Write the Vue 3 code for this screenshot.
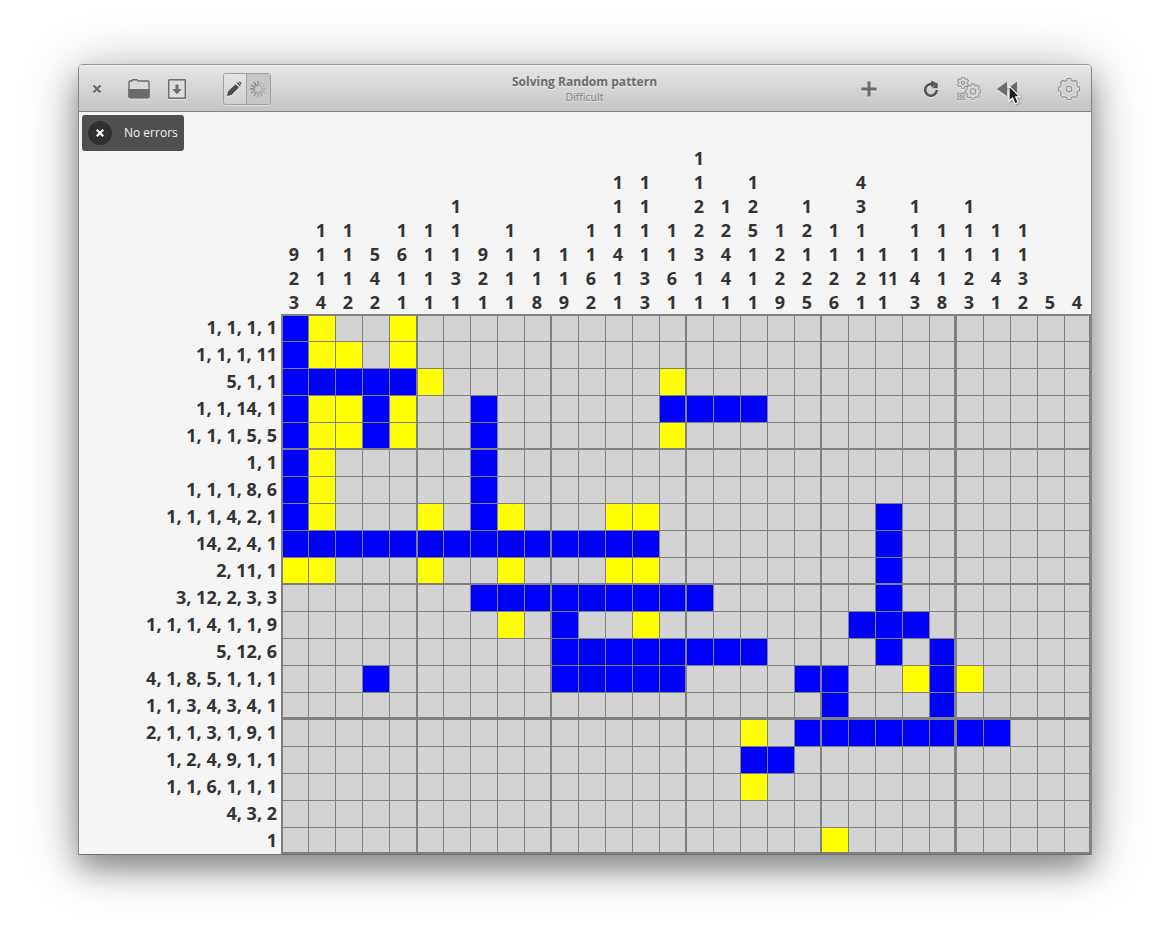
<script setup>
const columnClues = [
  '9 2 3', '1 1 1 4', '1 1 1 2', '5 4 2', '1 6 1 1', '1 1 1 1', '1 1 1 3 1', '9 2 1', '1 1 1 1', '1 1 8',
  '1 1 9', '1 1 6 2', '1 1 1 4 1 1', '1 1 1 1 3 3', '1 1 6 1', '1 1 2 2 3 1 1', '1 2 4 4 1', '1 2 5 1 1 1',
  '1 2 2 9', '1 2 1 2 5', '1 1 2 6', '4 3 1 1 2 1', '1 11 1', '1 1 1 4 3', '1 1 1 8', '1 1 1 2 3', '1 1 4 1',
  '1 1 3 2', '5', '4',
].map((clue) => clue.split(' '))

const rowClues = [
  '1, 1, 1, 1', '1, 1, 1, 11', '5, 1, 1', '1, 1, 14, 1', '1, 1, 1, 5, 5', '1, 1', '1, 1, 1, 8, 6',
  '1, 1, 1, 4, 2, 1', '14, 2, 4, 1', '2, 11, 1', '3, 12, 2, 3, 3', '1, 1, 1, 4, 1, 1, 9', '5, 12, 6',
  '4, 1, 8, 5, 1, 1, 1', '1, 1, 3, 4, 3, 4, 1', '2, 1, 1, 3, 1, 9, 1', '1, 2, 4, 9, 1, 1', '1, 1, 6, 1, 1, 1',
  '4, 3, 2', '1',
]

// '#' is a filled cell, 'o' a cell marked as uncertain
const rows = [
  '#o..o',
  '#oo.o',
  '#####o........o',
  '#oo#o..#......####',
  '#oo#o..#......o',
  '#o.....#',
  '#o.....#',
  '#o...o.#o...oo........#',
  '##############........#',
  'oo...o..o...oo........#',
  '.......#########......#',
  '........o.#..o.......###',
  '..........########....#.#',
  '...#......#####....##..o#o',
  '....................#...#',
  '.................o.########',
  '.................##',
  '.................o',
  '',
  '....................o',
].map((r) => r.padEnd(30, '.').split(''))

const spokes = Array.from({ length: 12 }, (_, i) => ({
  angle: i * 30,
  opacity: i === 0 ? 0.7 : 0.15 + (i / 12) * 0.8,
}))

// Outline of a cog with flat teeth, centred on the given point
function cog(cx, cy, teeth, inner, outer) {
  const step = (Math.PI * 2) / teeth
  const points = []
  for (let i = 0; i < teeth; i++) {
    const a = i * step - Math.PI / 2
    for (const [offset, radius] of [[-0.32, inner], [-0.22, outer], [0.22, outer], [0.32, inner]]) {
      const t = a + offset * step
      points.push(`${(cx + radius * Math.cos(t)).toFixed(2)} ${(cy + radius * Math.sin(t)).toFixed(2)}`)
    }
  }
  return `M${points.join('L')}Z`
}
</script>

<template>
  <main class="desktop">
    <section class="window">
      <header class="bar">
        <div class="side">
          <svg class="icon close" width="16" height="16" viewBox="0 0 16 16">
            <path d="M4.5 4.5l7 7M11.5 4.5l-7 7" stroke="#6b6b6b" stroke-width="2.3" />
          </svg>
          <svg class="icon" width="24" height="24" viewBox="0 0 24 24">
            <path d="M2 19.5V5.2Q2 4 3.2 4H4.5L5.5 2.8H9.8L11 4H20.8Q22 4 22 5.2V19.5Q22 20.7 20.8 20.7H3.2Q2 20.7 2 19.5Z" fill="#d9d9d9" stroke="#6b6b6b" stroke-width="1.4" />
            <path d="M1.4 12H22.7V19.5Q22.7 21.3 21 21.3H3Q1.4 21.3 1.4 19.5Z" fill="#6b6b6b" />
          </svg>
          <svg class="icon save" width="24" height="24" viewBox="0 0 24 24">
            <rect x="3.7" y="2.7" width="16.6" height="18.6" rx=".6" fill="#dcdcdc" stroke="#6b6b6b" stroke-width="1.4" />
            <path d="M10.5 7.5h3v4.5h3.3L12 17.3 7.2 12h3.3z" fill="#6b6b6b" />
          </svg>
          <div class="toggle">
            <span class="option">
              <svg class="icon" width="16" height="16" viewBox="0 0 16 16">
                <path d="M1 15l1-4.4 7.6-7.4 3.3 3.3-7.5 7.4zM10.6 2.3l1-1 3.3 3.3-1 1z" fill="#4a4a4a" />
                <path d="M12.4.9q1.3-.8 2.4.4t.4 2.4z" fill="#4a4a4a" />
              </svg>
            </span>
            <span class="option pressed">
              <svg width="16" height="16" viewBox="0 0 16 16">
                <path v-for="s in spokes" :key="s.angle" d="M8 .6V4.4" stroke="#707070" stroke-width="1.3" stroke-linecap="round" :opacity="s.opacity" :transform="`rotate(${s.angle} 8 8)`" />
              </svg>
            </span>
          </div>
        </div>
        <div class="heading">
          <div class="title">Solving Random pattern</div>
          <div class="subtitle">Difficult</div>
        </div>
        <div class="side right">
          <svg class="icon plus" width="24" height="24" viewBox="0 0 24 24">
            <path d="M12 4.5V19.5M4.5 12H19.5" stroke="#6b6b6b" stroke-width="3" />
          </svg>
          <svg class="icon" width="24" height="24" viewBox="0 0 24 24">
            <path d="M14.5 7.7A5.8 5.8 0 1 0 17.8 13" fill="none" stroke="#555" stroke-width="2.6" />
            <path d="M12.2 3.4l6.3 3.1-6.3 4.2z" fill="#555" />
            <path d="M18.7 5.8V11.3H12.9z" fill="#555" />
          </svg>
          <svg class="icon" width="24" height="24" viewBox="0 0 24 24" fill="#d8d8d8" stroke="#999" stroke-width="1.1" stroke-linejoin="round">
            <path :d="cog(16, 14.5, 8, 6.4, 7.8)" />
            <circle cx="16" cy="14.5" r="2.7" />
            <path :d="cog(6, 5.8, 6, 4.4, 5.8)" />
            <circle cx="6" cy="5.8" r="1.6" />
            <path d="M.8 16.2h2l1.2.9 1.2-.9h2v2l-.8 1.3.8 1.3v2h-2l-1.2-.8-1.2.8h-2v-2l.8-1.3-.8-1.3z" />
            <circle cx="4" cy="19.5" r="1.2" />
          </svg>
          <span class="rewind">
            <svg class="icon" width="24" height="24" viewBox="0 0 24 24">
              <path d="M2 12l10-7.2v14.4zM12 12l10-7.2v14.4z" fill="#6b6b6b" />
            </svg>
            <svg class="pointer" width="18" height="24" viewBox="0 0 18 24">
              <path d="M2 1.8V17.3L5.6 14 8.1 19.9 11.2 18.5 8.7 12.8H13z" fill="#1c1c1c" stroke="#fff" stroke-width="1.2" stroke-linejoin="round" />
            </svg>
          </span>
          <svg class="icon prefs" width="24" height="24" viewBox="0 0 24 24" fill="#dadada" stroke="#939393" stroke-width="1.1" stroke-linejoin="round">
            <path :d="cog(12, 12, 8, 8.9, 10.7)" />
            <circle cx="12" cy="12" r="6.3" stroke="#c6c6c6" />
            <circle cx="12" cy="12" r="2.8" />
          </svg>
        </div>
      </header>

      <div class="game">
        <div class="toast">
          <span class="dismiss">
            <svg width="10" height="10" viewBox="0 0 10 10">
              <path d="M1.8 1.8l6.4 6.4M8.2 1.8L1.8 8.2" stroke="#f5f5f5" stroke-width="2.3" />
            </svg>
          </span>
          <span class="message">No errors</span>
        </div>
        <div class="column-clues">
          <div v-for="(clue, c) in columnClues" :key="c" class="column-clue">
            <div>
              <div v-for="(n, i) in clue" :key="i">{{ n }}</div>
            </div>
          </div>
        </div>
        <div class="row-clues">
          <div v-for="(clue, r) in rowClues" :key="r" class="row-clue">{{ clue }}</div>
        </div>
        <div class="board">
          <div v-for="(row, r) in rows" :key="r" class="row">
            <div v-for="(cell, c) in row" :key="c" class="cell" :class="{ filled: cell === '#', marked: cell === 'o' }"></div>
          </div>
        </div>
      </div>
    </section>
  </main>
</template>

<style>
body {
  background: #fff;
}
</style>

<style scoped>
.desktop {
  box-sizing: border-box;
  width: 1170px;
  height: 947px;
  padding: 64px 78px;
  overflow: hidden;
  background: #fff;
  color: #333;
  font-family: "Open Sans", "Noto Sans", sans-serif;
}

.window {
  box-sizing: border-box;
  width: 1014px;
  height: 791px;
  border: 1px solid #858585;
  border-top-color: #979797;
  border-bottom-color: #707070;
  border-radius: 5px 5px 0 0;
  background: #f5f5f5;
  box-shadow: 0 14px 28px rgba(0, 0, 0, 0.34), 0 6px 60px rgba(0, 0, 0, 0.28);
}

.bar {
  box-sizing: border-box;
  display: grid;
  grid-template-columns: 1fr auto 1fr;
  align-items: center;
  height: 47px;
  padding: 2px 10px 0;
  border-bottom: 1px solid #858585;
  border-radius: 4px 4px 0 0;
  background: linear-gradient(#e6e6e6, #c5c5c5);
  box-shadow: inset 0 1px 0 #f2f2f2;
}

.side {
  display: flex;
  align-items: center;
  gap: 14px;
}

.right {
  justify-content: flex-end;
}

.icon {
  display: block;
  filter: drop-shadow(0 1px 0 rgba(255, 255, 255, 0.5));
}

.close {
  margin-right: 8px;
}

.save {
  margin-right: 20px;
}

.plus {
  margin-right: 24px;
}

.prefs {
  margin-left: 24px;
}

.toggle {
  box-sizing: border-box;
  display: flex;
  width: 48px;
  height: 32px;
  border: 1px solid #a0a0a0;
  border-radius: 3px;
  overflow: hidden;
  box-shadow: 0 1px 0 rgba(255, 255, 255, 0.4);
}

.option {
  flex: 1;
  display: flex;
  align-items: center;
  justify-content: center;
  padding-right: 2px;
  background: linear-gradient(#e4e4e4, #cfcfcf);
}

.pressed {
  flex: none;
  width: 24px;
  box-sizing: border-box;
  border-left: 1px solid #a0a0a0;
  background: #c7c7c7;
}

.heading {
  margin-right: 1px;
  text-align: center;
  color: #6b6b6b;
  text-shadow: 0 1px 0 rgba(255, 255, 255, 0.5);
}

.title {
  font-size: 12.05px;
  font-weight: 700;
  line-height: 16px;
}

.subtitle {
  font-size: 10.5px;
  line-height: 15px;
  color: #808080;
}

.rewind {
  position: relative;
}

.pointer {
  position: absolute;
  left: 12px;
  top: 7px;
  filter: drop-shadow(1px 1px 1px rgba(0, 0, 0, 0.3));
}

.game {
  position: relative;
  display: grid;
  grid-template-columns: 202px 810px;
  grid-template-rows: 202px 540px;
}

.toast {
  position: absolute;
  left: 3px;
  top: 3px;
  box-sizing: border-box;
  display: flex;
  align-items: center;
  gap: 12px;
  width: 102px;
  height: 36px;
  padding-left: 6px;
  border-radius: 3px;
  background: #4f4f4f;
  color: #f2f2f2;
  font-size: 12px;
  white-space: nowrap;
}

.message {
  padding-bottom: 2px;
}

.dismiss {
  display: flex;
  align-items: center;
  justify-content: center;
  width: 24px;
  height: 24px;
  border-radius: 50%;
  background: #303030;
}

.column-clues {
  grid-column: 2;
  display: flex;
  align-items: flex-end;
}

.column-clue {
  display: flex;
  justify-content: center;
  box-sizing: border-box;
  width: 27px;
  padding-right: 1px;
  font-size: 18px;
  font-weight: 700;
  line-height: 24px;
}

.row-clues {
  padding-right: 4px;
}

.row-clue {
  height: 27px;
  font-size: 18px;
  font-weight: 700;
  line-height: 26px;
  text-align: right;
  white-space: nowrap;
}

.board {
  box-sizing: border-box;
  border: solid #808080;
  border-width: 1px 0 0 1px;
  background: #d3d3d3;
}

.row {
  display: flex;
  height: 27px;
}

.cell {
  box-sizing: border-box;
  width: 27px;
  border: solid #808080;
  border-width: 0 1px 1px 0;
}

.cell:first-child,
.cell:nth-child(6) {
  border-left-width: 1px;
}

.cell:nth-child(5n + 10) {
  border-right-width: 2px;
}

.cell:nth-child(25) {
  border-right-width: 3px;
}

.cell:last-child {
  width: 26px;
}

.row:first-child .cell {
  border-top-width: 1px;
}

.row:nth-child(5n) .cell {
  border-bottom-width: 2px;
}

.row:nth-child(15) .cell {
  border-bottom-width: 3px;
}

.row:last-child {
  height: 26px;
}

.filled {
  background: #00f;
}

.marked {
  background: #ff0;
}
</style>
